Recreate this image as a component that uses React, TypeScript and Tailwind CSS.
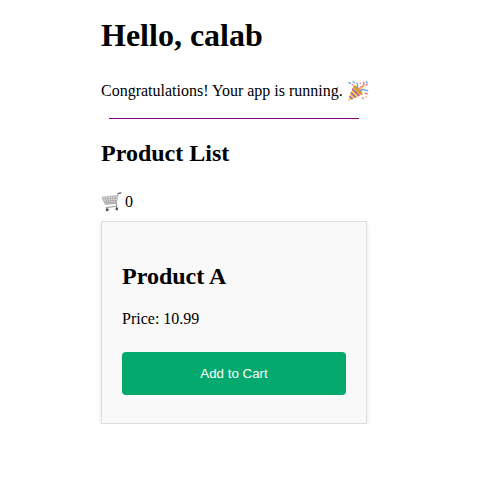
function PartyPopper() {
  return (
    <svg className="ml-[4px] h-[22px] w-[22px] shrink-0" viewBox="0 0 22 22" fill="none">
      <path d="M6.5 5.5 15.5 14.5 2.2 20.4Q1 20.8 1.4 19.6Z" fill="#f8c84b" />
      <path d="M6.5 5.5Q8.6 4.6 12.4 8.4T15.5 14.5Q13 15.4 9.4 11.4T6.5 5.5Z" fill="#e39a35" />
      <path d="M5.2 8.8 12.2 16M3.8 12.6 8.8 17.4M2.5 16.3 5.6 19" stroke="#9a58c4" strokeWidth="1.4" />
      <path d="M9.5 8Q12 5.5 9.5 2.6" stroke="#6f9be8" strokeWidth="1.3" />
      <path d="M12 10Q13 7 15.2 6.4T16.4 1.8" stroke="#ef7e91" strokeWidth="1.5" />
      <path d="M13 11Q16 8.6 18 10T21 9.8" stroke="#6f9be8" strokeWidth="1.4" />
      <path d="M12.5 9.5 17.5 5.8" stroke="#f4b84e" strokeWidth="1.2" />
      <path d="M1.5 2.2 4 3.6M6 1.5 7.5 3.2M19 1.5 20.5 3.3" stroke="#5c9be5" strokeWidth="1.3" />
      <path d="M4.8 4.3 6 5M18.5 5.2 20.5 4.5M17.8 13.2 20.6 14" stroke="#ef6580" strokeWidth="1.4" />
      <path d="M15 17.4 16.8 19M12.8 2.8 13.8 3.8" stroke="#f07f91" strokeWidth="1.4" />
      <path d="M18.2 16.5 19.5 17.5" stroke="#e9b74d" strokeWidth="1.2" />
    </svg>
  );
}

function ShoppingCart() {
  return (
    <svg className="h-[22px] w-[21px] shrink-0" viewBox="0 0 21 22" fill="none">
      <path d="M1 6.2 16.5 4.5 15.3 12.5 4.3 13.4Z" fill="#e3e3e3" />
      <path d="M1 6.2 16.5 4.5M1.8 8.1 16.1 7M2.7 10.1 15.8 9.4M3.5 11.8 15.5 11.2" stroke="#a2a2a2" strokeWidth=".7" />
      <path d="M3.8 6 6.2 13.2M6.4 5.7 8.2 13M9 5.5 10.2 12.8M11.7 5.2 12.2 12.8M14.2 5 14 12.6M1 6.2 4.3 13.4 15.3 12.5 17.2 2.5" stroke="#989898" strokeWidth=".7" />
      <path d="M17.2 2.5 20 1.9" stroke="#6a6a6a" strokeWidth="1.4" strokeLinecap="round" />
      <path d="M15.3 12.5 15.8 15.2 5.2 16.6 6 18M15.5 15.3 15.8 17" stroke="#858585" strokeWidth=".9" />
      <circle cx="6.2" cy="18.8" r="1.5" fill="#555" />
      <circle cx="15.8" cy="18" r="1.4" fill="#555" />
    </svg>
  );
}

export default function App() {
  return (
    <main className="ml-[101px] w-[267px] pt-[17px] font-['Liberation_Serif',serif] text-base text-black">
      <h1 className="text-[32px] leading-[37px] font-bold whitespace-nowrap">Hello, calab</h1>
      <div className="mt-[26px] flex h-[22px] items-center whitespace-nowrap">
        <p className="leading-[18px]">Congratulations! Your app is running.</p>
        <PartyPopper />
      </div>
      <hr className="mr-[9px] ml-2 mt-[16px] border-[#800080]" />
      <h2 className="mt-[20px] text-[24px] leading-[28px] font-bold">Product List</h2>
      <div className="mt-[24px] flex h-[22px] items-center gap-[3px]"><ShoppingCart /><span>0</span></div>
      <section className="mt-2 h-[203px] w-[266px] border border-[#ddd] bg-[#f9f9f9] px-5 pt-10 shadow-[0_2px_4px_rgba(0,0,0,0.1)]">
        <h2 className="text-[24px] leading-[28px] font-bold">Product A</h2>
        <p className="mt-5 leading-[18px]">Price: 10.99</p>
        <button className="mt-6 h-[43px] w-full rounded bg-[#04aa6d] font-['Liberation_Sans',sans-serif] text-[13.333px] text-white">Add to Cart</button>
      </section>
    </main>
  );
}
